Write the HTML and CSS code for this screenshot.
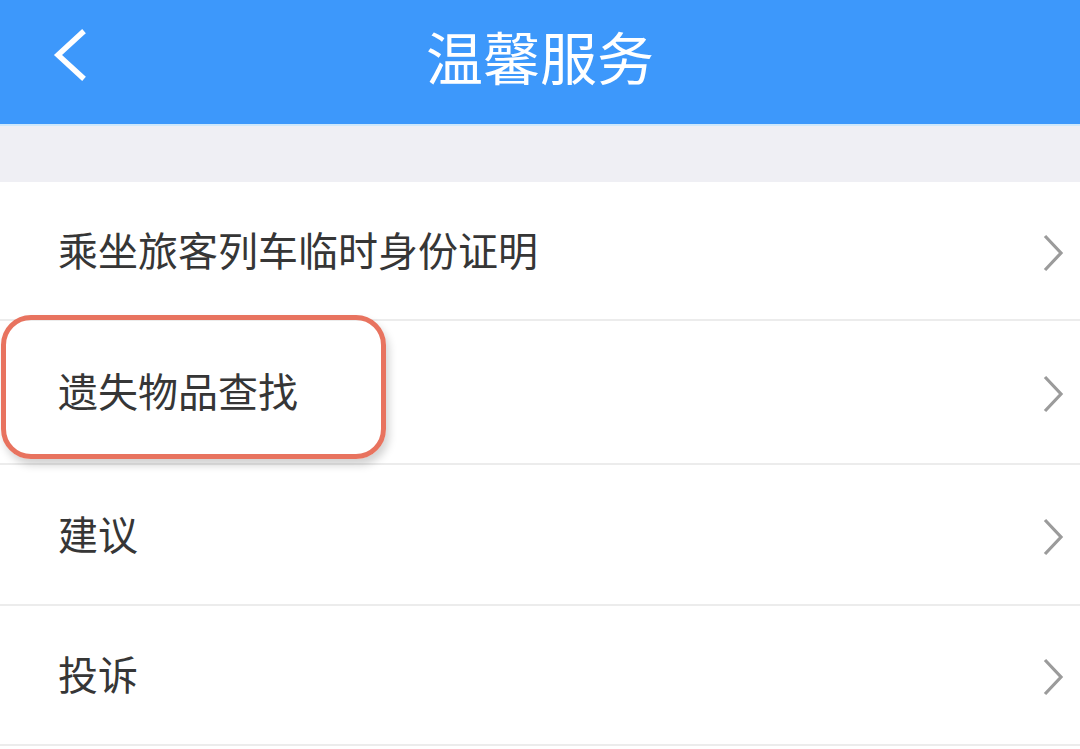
FILE: index.html
```html
<!DOCTYPE html>
<html lang="zh-CN">
<head>
<meta charset="utf-8">
<link rel="stylesheet" href="styles.css">
</head>
<body>
<div class="page">
  <header class="nav">
    <svg class="back" width="40" height="56" viewBox="0 0 40 56"><polyline points="32,6 8,28 32,50" fill="none" stroke="#fff" stroke-width="5.5" stroke-linecap="square" stroke-linejoin="miter"/></svg>
    <h1 class="title">温馨服务</h1>
  </header>
  <div class="gap"></div>
  <ul class="list">
    <li class="row r1"><span class="label">乘坐旅客列车临时身份证明</span><svg class="chev" width="24" height="40" viewBox="0 0 24 40"><polyline points="4,3 20,20 4,37" fill="none" stroke="#9b9b9b" stroke-width="3.2"/></svg></li>
    <li class="row r2"><span class="label">遗失物品查找</span><svg class="chev" width="24" height="40" viewBox="0 0 24 40"><polyline points="4,3 20,20 4,37" fill="none" stroke="#9b9b9b" stroke-width="3.2"/></svg><div class="mark"></div></li>
    <li class="row r3"><span class="label">建议</span><svg class="chev" width="24" height="40" viewBox="0 0 24 40"><polyline points="4,3 20,20 4,37" fill="none" stroke="#9b9b9b" stroke-width="3.2"/></svg></li>
    <li class="row r4"><span class="label">投诉</span><svg class="chev" width="24" height="40" viewBox="0 0 24 40"><polyline points="4,3 20,20 4,37" fill="none" stroke="#9b9b9b" stroke-width="3.2"/></svg></li>
  </ul>
</div>
</body>
</html>
```
FILE: styles.css
```css
* { box-sizing: border-box; }
html, body { margin: 0; padding: 0; }
body {
  width: 1080px;
  height: 749px;
  overflow: hidden;
  background: #ffffff;
  font-family: "Noto Sans CJK SC", "Noto Sans", sans-serif;
}
.page { display: flex; flex-direction: column; }
.nav {
  position: relative;
  height: 124px;
  background: #3d98fb;
  display: flex;
  align-items: center;
  justify-content: center;
}
.back {
  position: absolute;
  left: 50px;
  top: 27px;
}
.title {
  margin: 0;
  margin-top: -14px;
  color: #ffffff;
  font-size: 57px;
  font-weight: 400;
}
.gap {
  height: 58px;
  background: #efeff4;
  border-top: 2px solid #cfe8fb;
}
.list { list-style: none; margin: 0; padding: 0; }
.row {
  position: relative;
  height: 141px;
  border-bottom: 2px solid #ececec;
  display: flex;
  align-items: center;
  justify-content: space-between;
  padding: 0 15px 0 58px;
}
.r1 { height: 139px; }
.r2 { height: 144px; }
.r3 { height: 141px; }
.r4 { height: 140px; }
.label {
  font-size: 40px;
  color: #363636;
  margin-top: -4px;
}
.chev { margin-top: 4px; }
.mark {
  position: absolute;
  left: 1px;
  top: -6px;
  width: 385px;
  height: 144px;
  border: 5px solid #e8735f;
  border-radius: 30px;
  box-shadow: 3px 6px 9px rgba(0,0,0,0.18);
}
```
